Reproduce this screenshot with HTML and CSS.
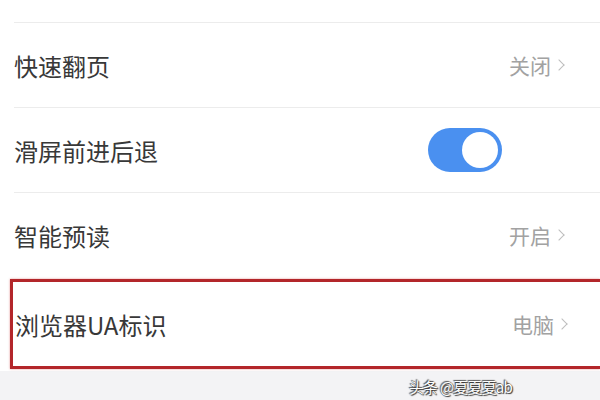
FILE: index.html
```html
<!DOCTYPE html>
<html lang="zh-CN">
<head>
    <meta charset="UTF-8">
    <meta name="viewport" content="width=device-width, initial-scale=1.0">
    <title>设置</title>
    <link rel="stylesheet" href="styles.css">
</head>
<body>
    <div class="settings">
        <div class="top-gap"></div>

        <div class="row">
            <span class="label">快速翻页</span>
            <span class="value">关闭<span class="chevron"></span></span>
        </div>

        <div class="row">
            <span class="label">滑屏前进后退</span>
            <span class="switch on"><span class="knob"></span></span>
        </div>

        <div class="row">
            <span class="label">智能预读</span>
            <span class="value">开启<span class="chevron"></span></span>
        </div>

        <div class="row row-marked">
            <span class="label">浏览器UA标识</span>
            <span class="value">电脑<span class="chevron"></span></span>
        </div>
    </div>

    <div class="footer">
        <span class="watermark">头条 @夏夏夏ab</span>
    </div>
</body>
</html>
```

FILE: styles.css
```css
:root {
    --text-color: #383838;
    --text-secondary: #a2a2a2;
    --divider: #ececec;
    --switch-on: #4a90f0;
    --mark-color: #b3262a;
    --page-bg: #f3f3f5;
}

* {
    margin: 0;
    padding: 0;
    box-sizing: border-box;
}

body {
    font-family: "Noto Sans CJK SC", "Noto Sans", sans-serif;
    background-color: var(--page-bg);
    width: 600px;
    height: 400px;
    overflow: hidden;
    color: var(--text-color);
}

.settings {
    background-color: #ffffff;
    padding-bottom: 2px;
}

.top-gap {
    height: 22px;
}

.row {
    display: flex;
    align-items: center;
    justify-content: space-between;
    height: 85px;
    margin-left: 14px;
    padding-right: 37px;
    border-top: 1px solid var(--divider);
}

.label {
    font-size: 24px;
}

.value {
    display: flex;
    align-items: center;
    font-size: 21px;
    color: var(--text-secondary);
}

.chevron {
    width: 8px;
    height: 8px;
    margin-left: 4px;
    border-top: 1px solid #bdbdbd;
    border-right: 1px solid #bdbdbd;
    transform: rotate(45deg);
}

.switch {
    position: relative;
    width: 74px;
    height: 44px;
    margin-right: 61px;
    border-radius: 22px;
    background-color: var(--switch-on);
}

.switch .knob {
    position: absolute;
    top: 4px;
    right: 4px;
    width: 36px;
    height: 36px;
    border-radius: 50%;
    background-color: #ffffff;
}

.row-marked {
    height: 90px;
    margin-top: 2px;
    margin-left: 10px;
    padding-left: 2px;
    padding-right: 34px;
    border: 3px solid var(--mark-color);
    border-right: none;
    box-shadow: 0 0 2px rgba(200, 40, 40, 0.5);
}

.footer {
    display: flex;
    justify-content: flex-end;
    padding: 5px 88px 0 0;
}

.watermark {
    font-size: 15px;
    letter-spacing: -0.8px;
    color: #ffffff;
    text-shadow: 0 0 1px #333, 1px 1px 1px #333, -1px -1px 1px #555;
}
```
